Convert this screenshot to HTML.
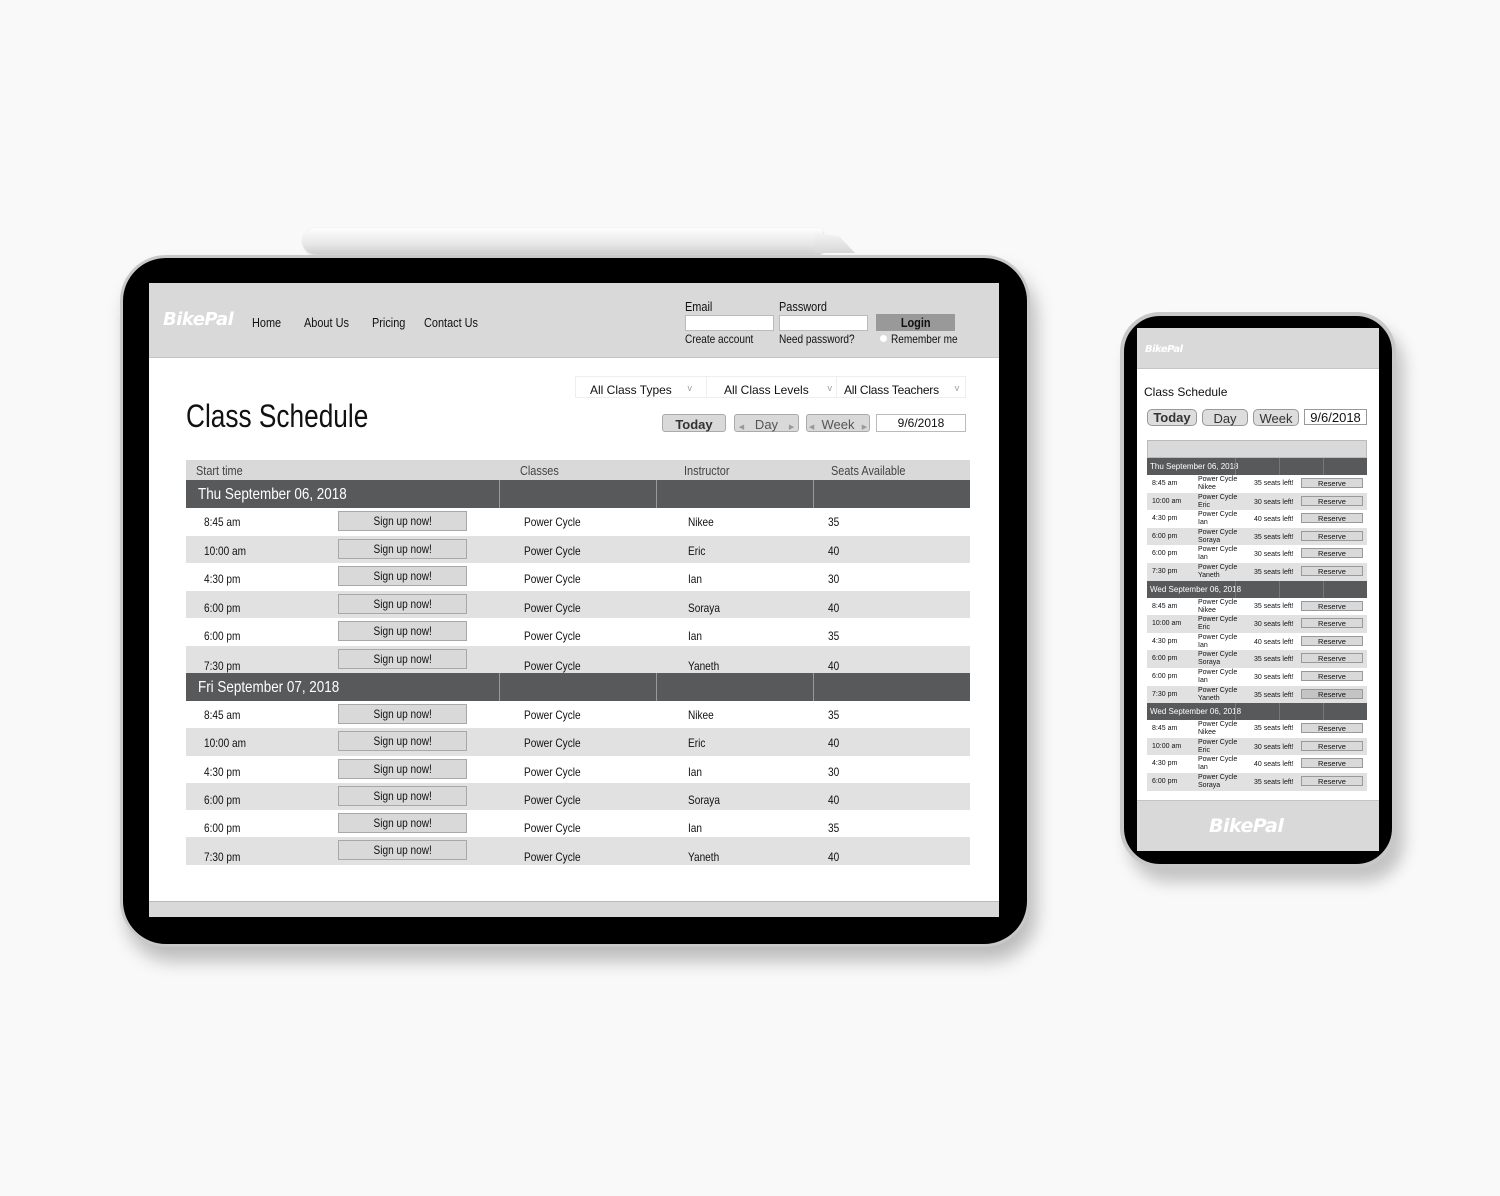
<!DOCTYPE html>
<html><head><meta charset="utf-8"><style>
*{margin:0;padding:0;box-sizing:border-box}
body{width:1500px;height:1196px;background:#f9f9f9;position:relative;overflow:hidden;font-family:"Liberation Sans Narrow","Liberation Sans",sans-serif;color:#111}
.a{position:absolute}
.n{transform:scaleX(.84);transform-origin:left top;white-space:nowrap}
.pen{left:303px;top:228px;width:520px;height:26px;border-radius:13px 4px 4px 13px;background:linear-gradient(#fdfdfd,#e8e8e8 60%,#d0d0d0);box-shadow:0 1px 2px rgba(0,0,0,.2)}
.pentip{left:815px;top:233px;width:40px;height:20px;background:linear-gradient(#f4f4f4,#d8d8d8);clip-path:polygon(0 0,60% 15%,100% 100%,0 100%)}
.tab{left:120px;top:255px;width:910px;height:692px;border-radius:46px;background:#000;border:3px solid #c9c9c9;box-shadow:6px 14px 18px rgba(0,0,0,.25)}
.scr{left:149px;top:283px;width:850px;height:634px;background:#fff;overflow:hidden}
.hdr{left:0;top:0;width:850px;height:75px;background:#d9d9d9;border-bottom:1px solid #c4c4c4}
.logo{font-family:"DejaVu Sans",sans-serif;font-weight:bold;font-style:italic;color:#fff;letter-spacing:-0.5px}
.nav{font-size:13px}
.inp{background:#fff;border:1px solid #bbb}
.sel{font-family:"Liberation Sans",sans-serif;font-size:12px}
.pill{background:#d9d9d9;border:1px solid #aaa;border-radius:3px;text-align:center;font-size:13px;color:#333}
.tbl{left:37px;top:177px;width:784px}
.row{position:relative;display:flex;font-size:12px}
.row>div{position:absolute}
.row>div:not(.btn):not(.s){transform:scaleX(.84);transform-origin:left top;white-space:nowrap}
.th{height:20px;background:#d9d9d9;color:#444;font-size:13px;line-height:22px}
.day{height:28px;background:#58595b;color:#fff;font-size:16px;line-height:30px}
.day .s{top:0;bottom:0;width:1px;background:#999}
.g{background:#e1e1e1}
.btn{left:152px;width:129px;height:20px;background:#d9d9d9;border:1px solid #a8a8a8;text-align:center;line-height:18px;font-size:12px}
.btn span{display:inline-block;transform:scaleX(.84)}
.ph{left:1120px;top:312px;width:276px;height:556px;border-radius:40px;background:#000;border:4px solid #c8c8c8;box-shadow:8px 14px 16px rgba(0,0,0,.22)}
.ps{left:1137px;top:328px;width:242px;height:523px;background:#fff;overflow:hidden}
.pt{left:10px;top:112px;width:220px;font-family:"Liberation Sans",sans-serif}
.pr{position:relative;height:17.6px;font-size:7px;line-height:8px}
.pr>div{position:absolute}
.pd{height:17px;background:#58595b;color:#fff;font-size:8px;line-height:17px;padding-left:3px;position:relative}
.pd i{position:absolute;top:0;bottom:0;width:1px;background:#777}
.rb{left:154px;top:3px;width:62px;height:10px;background:#d9d9d9;border:1px solid #999;text-align:center;font-size:7.5px;line-height:9px}
.pp{border:1px solid #999;border-radius:5px;background:#ddd;text-align:center;color:#333}
</style></head><body>
<div class="a pen"></div><div class="a pentip"></div>
<div class="a tab"></div>
<div class="a scr">
 <div class="a hdr"></div>
 <div class="a logo" style="left:14px;top:26px;font-size:18px">BikePal</div>
 <div class="a nav n" style="left:103px;top:32px">Home</div>
 <div class="a nav n" style="left:155px;top:32px">About Us</div>
 <div class="a nav n" style="left:223px;top:32px">Pricing</div>
 <div class="a nav n" style="left:275px;top:32px">Contact Us</div>
 <div class="a nav n" style="left:536px;top:16px">Email</div>
 <div class="a nav n" style="left:630px;top:16px">Password</div>
 <div class="a inp" style="left:536px;top:32px;width:89px;height:16px"></div>
 <div class="a inp" style="left:630px;top:32px;width:89px;height:16px"></div>
 <div class="a" style="left:727px;top:31px;width:79px;height:17px;background:#999;text-align:center;font-size:13px;font-weight:bold;line-height:18px"><span style="display:inline-block;transform:scaleX(.84)">Login</span></div>
 <div class="a n" style="left:536px;top:49px;font-size:12px">Create account</div>
 <div class="a n" style="left:630px;top:49px;font-size:12px">Need password?</div>
 <div class="a" style="left:731px;top:52px;width:7px;height:7px;border-radius:50%;background:#fff"></div>
 <div class="a n" style="left:742px;top:49px;font-size:12px">Remember me</div>
 <div class="a" style="left:37px;top:115px;font-size:32px;transform:scaleX(.82);transform-origin:left top;white-space:nowrap">Class Schedule</div>
 <div class="a" style="left:426px;top:93px;width:391px;height:22px;border:1px solid #eee;display:flex">
  <div class="sel" style="width:131px;padding:6px 0 0 14px;border-right:1px solid #eee;position:relative">All Class Types<span style="position:absolute;right:14px;color:#999;font-size:9px">v</span></div>
  <div class="sel" style="width:130px;padding:6px 0 0 17px;border-right:1px solid #eee;position:relative">All Class Levels<span style="position:absolute;right:4px;color:#999;font-size:9px">v</span></div>
  <div class="sel" style="width:128px;padding:6px 0 0 7px;position:relative;letter-spacing:-.2px">All Class Teachers<span style="position:absolute;right:6px;color:#999;font-size:9px">v</span></div>
 </div>
 <div class="a pill" style="left:513px;top:131px;width:64px;height:18px;font-weight:bold;line-height:20px">Today</div>
 <div class="a pill" style="left:585px;top:131px;width:65px;height:18px;line-height:20px;color:#555"><span style="font-size:7px;color:#999">◀</span>&nbsp;&nbsp;&nbsp;Day&nbsp;&nbsp;&nbsp;<span style="font-size:7px;color:#999">▶</span></div>
 <div class="a pill" style="left:657px;top:131px;width:64px;height:18px;line-height:20px;color:#555"><span style="font-size:7px;color:#999">◀</span>&nbsp;&nbsp;Week&nbsp;&nbsp;<span style="font-size:7px;color:#999">▶</span></div>
 <div class="a" style="left:727px;top:131px;width:90px;height:18px;border:1px solid #bbb;text-align:center;font-size:12px;line-height:17px">9/6/2018</div>
 <div class="a tbl">
  <div class="row th"><div style="left:10px">Start time</div><div style="left:334px">Classes</div><div style="left:498px">Instructor</div><div style="left:645px">Seats Available</div></div>
  <div class="row day"><div style="left:12px">Thu September 06, 2018</div><div class="s" style="left:313px"></div><div class="s" style="left:470px"></div><div class="s" style="left:627px"></div></div>
  <div class="row" style="height:27.5px"><div style="left:18px;top:7px">8:45 am</div><div class="btn" style="top:3px"><span>Sign up now!</span></div><div style="left:338px;top:7px">Power Cycle</div><div style="left:502px;top:7px">Nikee</div><div style="left:642px;top:7px">35</div></div>
  <div class="row g" style="height:27.5px"><div style="left:18px;top:8px">10:00 am</div><div class="btn" style="top:3px"><span>Sign up now!</span></div><div style="left:338px;top:8px">Power Cycle</div><div style="left:502px;top:8px">Eric</div><div style="left:642px;top:8px">40</div></div>
  <div class="row" style="height:27.5px"><div style="left:18px;top:9px">4:30 pm</div><div class="btn" style="top:3px"><span>Sign up now!</span></div><div style="left:338px;top:9px">Power Cycle</div><div style="left:502px;top:9px">Ian</div><div style="left:642px;top:9px">30</div></div>
  <div class="row g" style="height:27.5px"><div style="left:18px;top:10px">6:00 pm</div><div class="btn" style="top:3px"><span>Sign up now!</span></div><div style="left:338px;top:10px">Power Cycle</div><div style="left:502px;top:10px">Soraya</div><div style="left:642px;top:10px">40</div></div>
  <div class="row" style="height:27.5px"><div style="left:18px;top:11px">6:00 pm</div><div class="btn" style="top:3px"><span>Sign up now!</span></div><div style="left:338px;top:11px">Power Cycle</div><div style="left:502px;top:11px">Ian</div><div style="left:642px;top:11px">35</div></div>
  <div class="row g" style="height:27.5px"><div style="left:18px;top:13px">7:30 pm</div><div class="btn" style="top:3px"><span>Sign up now!</span></div><div style="left:338px;top:13px">Power Cycle</div><div style="left:502px;top:13px">Yaneth</div><div style="left:642px;top:13px">40</div></div>
  <div class="row day"><div style="left:12px">Fri September 07, 2018</div><div class="s" style="left:313px"></div><div class="s" style="left:470px"></div><div class="s" style="left:627px"></div></div>
  <div class="row" style="height:27.3px"><div style="left:18px;top:7px">8:45 am</div><div class="btn" style="top:3px"><span>Sign up now!</span></div><div style="left:338px;top:7px">Power Cycle</div><div style="left:502px;top:7px">Nikee</div><div style="left:642px;top:7px">35</div></div>
  <div class="row g" style="height:27.3px"><div style="left:18px;top:8px">10:00 am</div><div class="btn" style="top:3px"><span>Sign up now!</span></div><div style="left:338px;top:8px">Power Cycle</div><div style="left:502px;top:8px">Eric</div><div style="left:642px;top:8px">40</div></div>
  <div class="row" style="height:27.3px"><div style="left:18px;top:9px">4:30 pm</div><div class="btn" style="top:3px"><span>Sign up now!</span></div><div style="left:338px;top:9px">Power Cycle</div><div style="left:502px;top:9px">Ian</div><div style="left:642px;top:9px">30</div></div>
  <div class="row g" style="height:27.3px"><div style="left:18px;top:10px">6:00 pm</div><div class="btn" style="top:3px"><span>Sign up now!</span></div><div style="left:338px;top:10px">Power Cycle</div><div style="left:502px;top:10px">Soraya</div><div style="left:642px;top:10px">40</div></div>
  <div class="row" style="height:27.3px"><div style="left:18px;top:11px">6:00 pm</div><div class="btn" style="top:3px"><span>Sign up now!</span></div><div style="left:338px;top:11px">Power Cycle</div><div style="left:502px;top:11px">Ian</div><div style="left:642px;top:11px">35</div></div>
  <div class="row g" style="height:27.3px"><div style="left:18px;top:13px">7:30 pm</div><div class="btn" style="top:3px"><span>Sign up now!</span></div><div style="left:338px;top:13px">Power Cycle</div><div style="left:502px;top:13px">Yaneth</div><div style="left:642px;top:13px">40</div></div>
 </div>
 <div class="a" style="left:0;top:618px;width:850px;height:16px;background:#d9d9d9;border-top:1px solid #bbb"></div>
</div>

<div class="a ph"></div>
<div class="a ps">
 <div class="a" style="left:0;top:0;width:242px;height:41px;background:#d9d9d9;border-bottom:1px solid #c4c4c4"></div>
 <div class="a logo" style="left:8px;top:16px;font-size:10px">BikePal</div>
 <div class="a" style="left:7px;top:57px;font-size:12px;font-family:'Liberation Sans',sans-serif">Class Schedule</div>
 <div class="a pp" style="left:10px;top:81px;width:50px;height:17px;font-weight:bold;font-size:13px;line-height:16px;font-family:'Liberation Sans',sans-serif">Today</div>
 <div class="a pp" style="left:65px;top:81px;width:46px;height:17px;font-size:13px;line-height:17px;font-family:'Liberation Sans',sans-serif">Day</div>
 <div class="a pp" style="left:116px;top:81px;width:46px;height:17px;font-size:13px;line-height:17px;font-family:'Liberation Sans',sans-serif">Week</div>
 <div class="a" style="left:167px;top:81px;width:63px;height:16px;border:1px solid #999;text-align:center;font-size:13px;line-height:15px;font-family:'Liberation Sans',sans-serif">9/6/2018</div>
 <div class="a pt">
  <div style="height:18px;background:#d9d9d9;border:1px solid #bbb"></div>
  <div class="pd">Thu September 06, 2018<i style="left:88px"></i><i style="left:132px"></i><i style="left:176px"></i></div>
  <div class="pr"><div style="left:5px;top:5px">8:45 am</div><div style="left:51px;top:1px">Power Cycle<br>Nikee</div><div style="left:107px;top:5px">35 seats left!</div><div class="rb">Reserve</div></div>
  <div class="pr g"><div style="left:5px;top:5px">10:00 am</div><div style="left:51px;top:1px">Power Cycle<br>Eric</div><div style="left:107px;top:6px">30 seats left!</div><div class="rb">Reserve</div></div>
  <div class="pr"><div style="left:5px;top:5px">4:30 pm</div><div style="left:51px;top:1px">Power Cycle<br>Ian</div><div style="left:107px;top:6px">40 seats left!</div><div class="rb">Reserve</div></div>
  <div class="pr g"><div style="left:5px;top:5px">6:00 pm</div><div style="left:51px;top:1px">Power Cycle<br>Soraya</div><div style="left:107px;top:6px">35 seats left!</div><div class="rb">Reserve</div></div>
  <div class="pr"><div style="left:5px;top:5px">6:00 pm</div><div style="left:51px;top:1px">Power Cycle<br>Ian</div><div style="left:107px;top:6px">30 seats left!</div><div class="rb">Reserve</div></div>
  <div class="pr g"><div style="left:5px;top:5px">7:30 pm</div><div style="left:51px;top:1px">Power Cycle<br>Yaneth</div><div style="left:107px;top:6px">35 seats left!</div><div class="rb">Reserve</div></div>
  <div class="pd">Wed September 06, 2018<i style="left:88px"></i><i style="left:132px"></i><i style="left:176px"></i></div>
  <div class="pr"><div style="left:5px;top:5px">8:45 am</div><div style="left:51px;top:1px">Power Cycle<br>Nikee</div><div style="left:107px;top:5px">35 seats left!</div><div class="rb">Reserve</div></div>
  <div class="pr g"><div style="left:5px;top:5px">10:00 am</div><div style="left:51px;top:1px">Power Cycle<br>Eric</div><div style="left:107px;top:6px">30 seats left!</div><div class="rb">Reserve</div></div>
  <div class="pr"><div style="left:5px;top:5px">4:30 pm</div><div style="left:51px;top:1px">Power Cycle<br>Ian</div><div style="left:107px;top:6px">40 seats left!</div><div class="rb">Reserve</div></div>
  <div class="pr g"><div style="left:5px;top:5px">6:00 pm</div><div style="left:51px;top:1px">Power Cycle<br>Soraya</div><div style="left:107px;top:6px">35 seats left!</div><div class="rb">Reserve</div></div>
  <div class="pr"><div style="left:5px;top:5px">6:00 pm</div><div style="left:51px;top:1px">Power Cycle<br>Ian</div><div style="left:107px;top:6px">30 seats left!</div><div class="rb">Reserve</div></div>
  <div class="pr g"><div style="left:5px;top:5px">7:30 pm</div><div style="left:51px;top:1px">Power Cycle<br>Yaneth</div><div style="left:107px;top:6px">35 seats left!</div><div class="rb" style="background:#c4c4c4">Reserve</div></div>
  <div class="pd">Wed September 06, 2018<i style="left:88px"></i><i style="left:132px"></i><i style="left:176px"></i></div>
  <div class="pr"><div style="left:5px;top:5px">8:45 am</div><div style="left:51px;top:1px">Power Cycle<br>Nikee</div><div style="left:107px;top:5px">35 seats left!</div><div class="rb">Reserve</div></div>
  <div class="pr g"><div style="left:5px;top:5px">10:00 am</div><div style="left:51px;top:1px">Power Cycle<br>Eric</div><div style="left:107px;top:6px">30 seats left!</div><div class="rb">Reserve</div></div>
  <div class="pr"><div style="left:5px;top:5px">4:30 pm</div><div style="left:51px;top:1px">Power Cycle<br>Ian</div><div style="left:107px;top:6px">40 seats left!</div><div class="rb">Reserve</div></div>
  <div class="pr g"><div style="left:5px;top:5px">6:00 pm</div><div style="left:51px;top:1px">Power Cycle<br>Soraya</div><div style="left:107px;top:6px">35 seats left!</div><div class="rb">Reserve</div></div>
 </div>
 <div class="a" style="left:0;top:472px;width:242px;height:51px;background:#d9d9d9;border-top:1px solid #c4c4c4"></div>
 <div class="a logo" style="left:72px;top:487px;font-size:19px">BikePal</div>
</div>
</body></html>
